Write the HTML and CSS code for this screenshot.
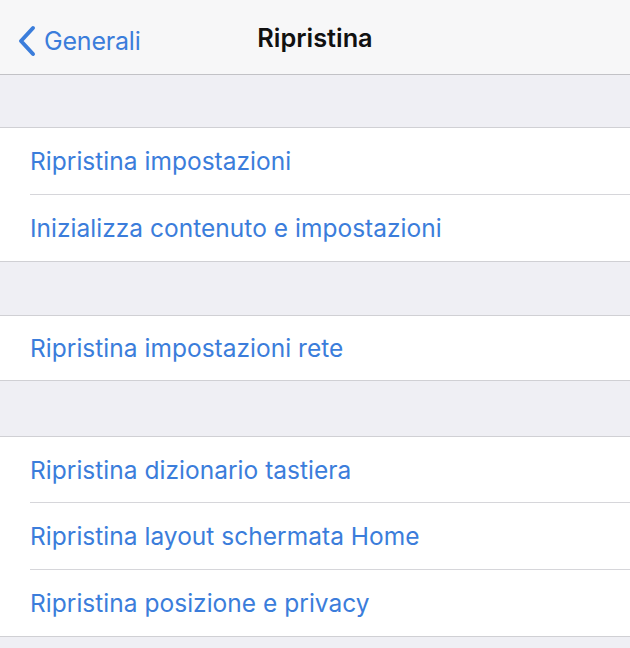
FILE: index.html
```html
<!DOCTYPE html>
<html lang="it">
<head>
<meta charset="utf-8">
<title>Ripristina</title>
<link rel="stylesheet" href="styles.css">
</head>
<body>
<div class="screen">
  <header class="navbar">
    <a class="back" href="#">
      <svg class="chevron" width="20" height="32" viewBox="0 0 20 32" aria-hidden="true">
        <path d="M16 3 L4 16 L16 29" fill="none" stroke="currentColor" stroke-width="4" stroke-linecap="round" stroke-linejoin="round"/>
      </svg>
      <span>Generali</span>
    </a>
    <h1 class="title">Ripristina</h1>
  </header>

  <div class="spacer spacer-a"></div>
  <ul class="group">
    <li class="row">Ripristina impostazioni</li>
    <li class="row">Inizializza contenuto e impostazioni</li>
  </ul>

  <div class="spacer spacer-b"></div>
  <ul class="group">
    <li class="row row-short">Ripristina impostazioni rete</li>
  </ul>

  <div class="spacer spacer-c"></div>
  <ul class="group">
    <li class="row row-first">Ripristina dizionario tastiera</li>
    <li class="row">Ripristina layout schermata Home</li>
    <li class="row">Ripristina posizione e privacy</li>
  </ul>
  <div class="spacer spacer-end"></div>
</div>
</body>
</html>
```

FILE: styles.css
```css
html, body {
  margin: 0;
  padding: 0;
  background: #efeff4;
}

body {
  font-family: Inter, "Liberation Sans", Arial, sans-serif;
  -webkit-font-smoothing: antialiased;
}

.screen {
  width: 630px;
  height: 648px;
  overflow: hidden;
  background: #efeff4;
}

.navbar {
  height: 74px;
  background: #f7f7f8;
  border-bottom: 1px solid #c2c2c6;
  display: flex;
  align-items: center;
  justify-content: center;
  position: relative;
}

.back {
  position: absolute;
  left: 17px;
  top: 24px;
  display: flex;
  align-items: center;
  gap: 7px;
  color: #3b7ddb;
  text-decoration: none;
  font-size: 25px;
  letter-spacing: -0.2px;
}

.chevron {
  display: block;
}

.back span {
  line-height: 32px;
  margin-top: 1px;
}

.title {
  margin: 0;
  font-size: 25.3px;
  font-weight: 600;
  color: #111;
  letter-spacing: 0;
  margin-left: 0;
  margin-top: 1px;
}

.spacer {
  background: #efeff4;
}
.spacer-a { height: 52px; }
.spacer-b { height: 53px; }
.spacer-c { height: 55px; }
.spacer-end { height: 20px; }

.group {
  list-style: none;
  margin: 0;
  padding: 0;
  background: #ffffff;
  border-top: 1px solid #d0d0d4;
  border-bottom: 1px solid #d0d0d4;
}

.row {
  height: 66px;
  display: flex;
  align-items: center;
  margin-left: 30px;
  color: #3b7ddb;
  font-size: 24.5px;
  letter-spacing: 0.02px;
}

.row + .row {
  border-top: 1px solid #d6d6da;
}

.row-short { height: 64px; }
.row-first { height: 65px; }
```
